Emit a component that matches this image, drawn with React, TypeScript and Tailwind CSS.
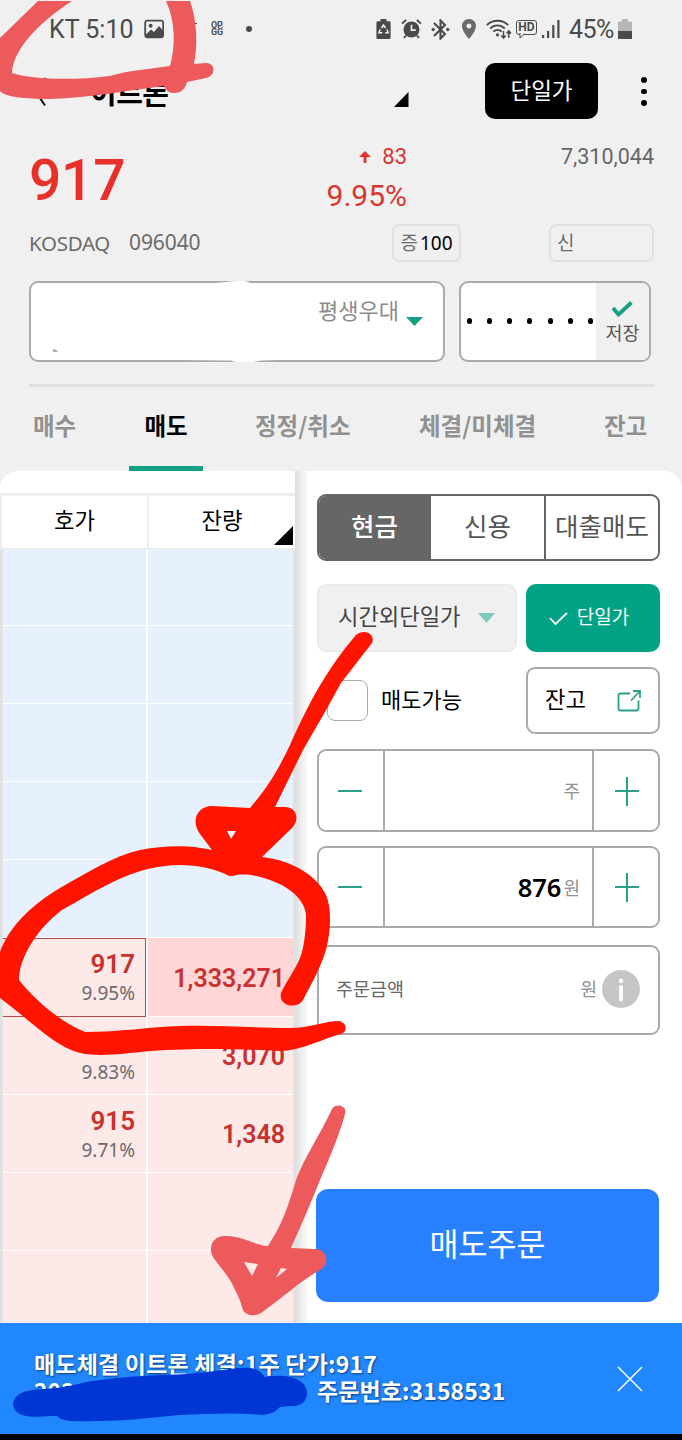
import { ReactNode } from 'react';
import { MdBluetoothConnected, MdLocationOn } from 'react-icons/md';

const ROWS = [
  { side: 'ask' },
  { side: 'ask' },
  { side: 'ask' },
  { side: 'ask' },
  { side: 'ask' },
  { side: 'bid', price: '917', rate: '9.95%', qty: '1,333,271', current: true },
  { side: 'bid', price: '916', rate: '9.83%', qty: '3,070' },
  { side: 'bid', price: '915', rate: '9.71%', qty: '1,348' },
  { side: 'bid' },
  { side: 'bid' },
];

const KR = "font-['Noto_Sans_CJK_KR',sans-serif]";
const NOTO = "font-['Noto_Sans','Noto_Sans_CJK_KR',sans-serif]";

function StatusBar() {
  return (
    <div className="flex h-[58px] items-center pl-[49px] text-[#4a4a4a]">
      <span className="w-[95px] whitespace-nowrap text-[25px] leading-none">KT 5:10</span>
      <svg className="h-5 w-5" viewBox="0 0 20 20">
        <rect x="1.2" y="1.7" width="18" height="16.6" rx="2" fill="none" stroke="#4a4a4a" strokeWidth="1.8" />
        <circle cx="6.6" cy="6.8" r="2" fill="#4a4a4a" />
        <path d="M2 15.5 7 10.5l3 2.6 5-6.1 4 4.6V18H2Z" fill="#4a4a4a" />
      </svg>
      <span className="ml-[30px] h-px w-[3px] -translate-y-[6px] bg-[#4a4a4a]" />
      <span className="ml-[14px] flex w-[14px] flex-col text-[9px] font-bold leading-[7px] tracking-[-0.200px]">
        <span className="h-[7px]">OP.</span>
        <span className="h-[7px]">GG</span>
      </span>
      <span className="ml-[21px] h-[6px] w-[6px] rounded-full bg-[#4a4a4a]" />
      {/* Battery saver */}
      <svg className="ml-[124px] h-5 w-[15px]" viewBox="0 0 15 20">
        <path d="M4.5 0h6v2.2H13c1 0 1.6.6 1.6 1.6v14.6c0 1-.6 1.6-1.6 1.6H2c-1 0-1.6-.6-1.6-1.6V3.8c0-1 .6-1.6 1.6-1.6h2.500Z" fill="#4a4a4a" />
        <path d="m5.400 9 2.100-3 2.100 3M11 10.500l1.200 3.300H9.300M6.300 13.800H2.900l1.200-3.300" fill="none" stroke="#f0f0f0" strokeWidth="1.500" />
      </svg>
      {/* Alarm */}
      <svg className="ml-[10px] h-5 w-[21px]" viewBox="0 0 21 20">
        <path d="M1 4.600 5.200 1M20 4.600 15.800 1M5 16.500l-2 2.500M16 16.500l2 2.500" stroke="#4a4a4a" strokeWidth="1.900" />
        <circle cx="10.500" cy="10.500" r="8" fill="#4a4a4a" />
        <path d="M10.500 5.800v5.400h4.300" fill="none" stroke="#f0f0f0" strokeWidth="1.700" />
      </svg>
      <MdBluetoothConnected className="ml-[6px] h-[25px] w-[25px]" />
      <MdLocationOn className="ml-[4px] h-[24px] w-[24px] text-[#6b6b6b]" />
      {/* Wifi */}
      <svg className="ml-[5px] h-[21px] w-[26px]" viewBox="0 0 26 21">
        <g fill="none" stroke="#4a4a4a" strokeWidth="1.900">
          <path d="M.8 6.200C6.500.2 16.500.2 22.200 6.200" />
          <path d="M4.200 9.500c4-4.200 10.600-4.200 14.600 0" />
          <path d="M7.300 12.700c2.400-2.400 6-2.400 8.400 0" />
          <path d="M17.500 12v7M15.300 16.600l2.200 2.500 2.200-2.500M22.800 19v-7M20.600 14.400l2.200-2.500 2.200 2.500" strokeWidth="1.500" />
        </g>
        <circle cx="11.500" cy="15.800" r="1.600" fill="#4a4a4a" />
      </svg>
      <span className="relative ml-[4px] flex h-[15px] w-[21px] -translate-y-[2px] items-center justify-center rounded-[3px] border-[1.500px] border-[#4a4a4a] text-[12px] font-bold leading-none">
        HD
        <svg className="absolute left-[2px] top-[12px] h-[6px] w-[8px]" viewBox="0 0 8 6">
          <path d="M1 0v5l5-4.500" fill="#f0f0f0" stroke="#4a4a4a" />
        </svg>
      </span>
      <svg className="ml-[5px] h-5 w-[18px]" viewBox="0 0 18 20" fill="#4a4a4a">
        <path d="M0 16h2.200v3H0zM5 12h2.200v7H5zM10.200 6h2.200v13h-2.200zM15.300 1h2.200v18h-2.200z" />
      </svg>
      <span className="ml-[9px] w-[49px] text-[25px] leading-none tracking-[-0.6px]">45%</span>
      <svg className="h-5 w-[14px]" viewBox="0 0 14 20">
        <path d="M4 0h6v2.500h3c.6 0 1 .4 1 1V12H0V3.500c0-.6.4-1 1-1h3Z" fill="#b5b5b5" />
        <path d="M0 12h14v7c0 .6-.4 1-1 1H1c-.6 0-1-.4-1-1Z" fill="#4a4a4a" />
      </svg>
    </div>
  );
}

function Header() {
  return (
    <div className="flex h-[66px] items-start">
      <svg className="ml-[34px] mt-[19px] h-[30px] w-[14px]" viewBox="0 0 14 30">
        <path d="M11.500 1 1.500 14.500l9.500 14" fill="none" stroke="#000" strokeWidth="1.800" />
      </svg>
      <h1 className={`${KR} ml-[42px] mt-[19px] w-[303px] text-[29px] font-bold leading-[29px] tracking-[-0.5px]`}>이트론</h1>
      <svg className="mt-[34px] h-[15px] w-[16px]" viewBox="0 0 16 15">
        <path d="M15.500 0v15H1Z" />
      </svg>
      <button className={`${KR} ml-[76px] mt-[5px] h-[56px] w-[113px] rounded-[10px] bg-black pb-[3px] text-[22.500px] text-white`}>
        단일가
      </button>
      <div className="ml-[43px] mt-[19px] flex flex-col gap-[6px]">
        <i className="h-[5.500px] w-[5.500px] rounded-full bg-black" />
        <i className="h-[5.500px] w-[5.500px] rounded-full bg-black" />
        <i className="h-[5.500px] w-[5.500px] rounded-full bg-black" />
      </div>
    </div>
  );
}

function Quote() {
  return (
    <div className="pl-[29px] pr-[28px]">
      <div className="flex h-[100px]">
        <div className="w-[110px] pt-[28px] text-[57px] font-medium leading-[57px] tracking-[-0.300px] text-[#e8302a]">917</div>
        <div className="ml-[148px] w-[120px] pt-[22px] text-right text-[#d8362f]">
          <div className="flex items-center justify-end text-[22px] leading-[22px]">
            <svg className="mr-[11px] h-3 w-3" viewBox="0 0 12 12">
              <path d="M6 0 12 6H7.400v6H4.600V6H0Z" fill="#e8302a" />
            </svg>
            83
          </div>
          <div className="mt-[13px] text-[30px] leading-[30px]">9.95%</div>
        </div>
        <div className="ml-auto w-[135px] pt-[21px] text-right text-[21.500px] leading-[24px] text-[#666]">7,310,044</div>
      </div>
      <div className={`${NOTO} flex h-[38px] items-center text-[21px] text-[#6b6b6b]`}>
        <span className="w-[100px] text-[20.500px] tracking-[-0.300px]">KOSDAQ</span>
        <span className="tracking-[-0.100px]">096040</span>
        <span className="ml-auto flex h-[38px] w-[69px] items-center justify-center rounded-[7px] border-2 border-[#e0e0e0] text-[19px] leading-none">
          증<span className="ml-[2px] text-[19px] text-black">100</span>
        </span>
        <span className="ml-[88px] flex h-[38px] w-[105px] items-center rounded-[7px] border-2 border-[#e0e0e0] pl-[6px] text-[19px] leading-none">신</span>
      </div>
    </div>
  );
}

function Account() {
  return (
    <div className="ml-[29px] mt-[19px] flex h-[81px] gap-[14px]">
      <div className="relative flex w-[416px] rounded-[9px] border-2 border-[#aaa] bg-white">
        <span className={`${KR} ml-[287px] mt-[15px] text-[22px] leading-[22px] text-[#8c8c8c]`}>평생우대</span>
        <svg className="ml-[7px] mt-[34px] h-[9px] w-[17px]" viewBox="0 0 17 9">
          <path d="M0 0h17L8.500 9Z" fill="#15a083" />
        </svg>
        <svg className="absolute left-[22px] top-[66px] h-[4px] w-[5px]" viewBox="0 0 5 4">
          <path d="M0 0v3h4.500v-1L1 0Z" fill="#aaa" />
        </svg>
        {/* Erased account number */}
        <svg className="absolute -top-[2px] left-[150px] h-[81px] w-[130px]" viewBox="0 0 130 81" fill="#fff">
          <path d="M30 2.500 55 0q12-1 15 3H30ZM0 79l130-1-50 1.500Q60 84 50 79.500Z" />
        </svg>
      </div>
      <div className="flex w-[192px] overflow-hidden rounded-[9px] border-2 border-[#aaa] bg-white">
        <div className="flex w-[135px] items-center justify-between pb-px pl-[6px] pr-[3px]">
          {Array.from({ length: 7 }, (_, i) => (
            <i key={i} className="h-[5.500px] w-[5px] rounded-full bg-black" />
          ))}
        </div>
        <div className="flex flex-1 flex-col items-center bg-[#f0f0f0] pt-[17px]">
          <svg className="-ml-[2px] h-[17px] w-[22px]" viewBox="0 0 22 17">
            <path d="m2 8 5.500 6.500L20.500 2.500" fill="none" stroke="#15a083" strokeWidth="3.800" />
          </svg>
          <span className={`${KR} mt-[6px] text-[18.500px] leading-[19px] text-[#555]`}>저장</span>
        </div>
      </div>
    </div>
  );
}

function Tabs() {
  return (
    <div className={`${KR} ml-[29px] mt-[22px] h-[87px] w-[625px] border-t-[3px] border-[#e0e0e0]`}>
      <div className="flex h-[84px] whitespace-nowrap pt-[26px] text-[23.500px] font-bold leading-[24px] text-[#919191]">
        <span className="ml-[4px] w-[96px]">매수</span>
        <span className="-mb-px flex w-[74px] flex-col items-center justify-between text-black">
          매도
          <i className="h-[6px] w-[74px] bg-[#12a084]" />
        </span>
        <span className="ml-[52px] w-[164px]">정정/취소</span>
        <span className="w-[185px]">체결/미체결</span>
        <span>잔고</span>
      </div>
    </div>
  );
}

function OrderBook() {
  return (
    <div className="relative z-10 flex w-[295px] flex-col overflow-hidden rounded-tl-[18px] bg-white">
      <div className={`${KR} relative z-10 mt-[22px] flex h-[57px] border-b-2 border-t-[3px] border-[#eee] bg-white text-[22.300px] leading-[47px]`}>
        <div className="w-[149px] border-l-2 border-r-2 border-[#eee] text-center">호가</div>
        <div className="relative flex-1 text-center">
          <span>잔량</span>
          <svg className="absolute bottom-[3px] right-[2px] h-[19px] w-[19px]" viewBox="0 0 19 19">
            <path d="M19 0v19H0Z" />
          </svg>
        </div>
      </div>
      <div className="-mt-[2px] min-h-0 flex-1 border-l-[3px] border-r-2 border-[#e2e2e2]">
        {ROWS.map((row, i) => (
          <div key={i} className={`flex h-[78.100px] ${row.side === 'ask' ? 'bg-[#e7f1fe]' : 'bg-[#fde9e8]'}`}>
            <div
              className={`flex w-[143px] flex-col items-end ${
                row.current ? 'border border-l-0 border-[#b54a4c] pr-[10px] pt-[11px]' : 'border-b-[1.500px] border-white pr-[11px] pt-[12px]'
              }`}
            >
              <span className="text-[26px] font-semibold leading-[28px] text-[#c7312e]">{row.price}</span>
              <span className={`${NOTO} mt-[2px] text-[19px] leading-[26px] text-[#6b6b6b]`}>{row.rate}</span>
            </div>
            <div
              className={`flex flex-1 items-center justify-end border-b-[1.500px] border-l-2 border-white pr-[8px] pt-[4px] text-[25px] font-semibold text-[#c7312e] ${
                row.current ? 'bg-[#ffd5d5]' : ''
              }`}
            >
              {row.qty}
            </div>
          </div>
        ))}
      </div>
    </div>
  );
}

function Stepper({ height, children }: { height: string; children: ReactNode }) {
  return (
    <div className={`flex ${height} rounded-[9px] border-2 border-[#aaa]`}>
      <div className="flex w-[66px] items-center justify-center border-r-2 border-[#aaa] pr-[3px]">
        <i className="h-[2px] w-[24px] bg-[#2aa089]" />
      </div>
      <div className="flex flex-1 items-center justify-end pr-[12px]">{children}</div>
      <div className="flex w-[66px] items-center justify-center border-l-2 border-[#aaa] pl-[2px]">
        <svg className="h-[30px] w-[24px]" viewBox="0 0 24 30">
          <path d="M0 15h24M12 1v29" stroke="#2aa089" strokeWidth="2" />
        </svg>
      </div>
    </div>
  );
}

function OrderForm() {
  return (
    <div className={`${KR} flex-1 rounded-tr-[18px] bg-gradient-to-r from-[#dedede] from-0% via-white via-[14px] to-white pl-[22px] pr-[22px] pt-[23px]`}>
      <div className="flex h-[67px] overflow-hidden rounded-[9px] border-2 border-[#666] bg-white text-[25.500px] leading-[58px] text-[#555]">
        <div className="w-[112px] bg-[#666] pr-px text-center font-medium text-white">현금</div>
        <div className="w-[115px] border-r-2 border-[#666] text-center">신용</div>
        <div className="flex-1 text-center">대출매도</div>
      </div>

      <div className="mt-[23px] flex h-[68px] justify-between">
        <div className="flex w-[200px] items-center rounded-[9px] border-2 border-[#ebebeb] bg-[#f0f0f0] pb-[5px] pl-[19px] text-[22.200px] text-[#444]">
          시간외단일가
          <svg className="ml-[18px] mt-[4px] h-[10px] w-[17px]" viewBox="0 0 17 10">
            <path d="M0 0h17L8.500 10Z" fill="#7dcbbc" />
          </svg>
        </div>
        <button className="flex w-[134px] items-center justify-center rounded-[10px] bg-[#02a384] pb-[4px] pr-[8px] text-[19px] text-white">
          <svg className="mr-[9px] mt-[5px] h-[13px] w-[19px]" viewBox="0 0 19 13">
            <path d="m1 6 5.500 6L18 1" fill="none" stroke="#fff" strokeWidth="1.800" />
          </svg>
          단일가
        </button>
      </div>

      <div className="mt-[15px] flex h-[67px] items-center justify-between">
        <label className="ml-[10px] flex items-center text-[22px] leading-none">
          <i className="mr-[13px] h-[41px] w-[41px] rounded-[8px] border-[1.500px] border-[#aaa] bg-white" />
          <span className="pb-[6px]">매도가능</span>
        </label>
        <button className="flex h-[67px] w-[134px] items-center justify-between rounded-[9px] border-2 border-[#aaa] bg-white pb-[4px] pl-[17px] pr-[17px] text-[22.300px]">
          잔고
          <svg className="mt-[4px] h-[22px] w-[24px]" viewBox="0 0 24 22" fill="none" stroke="#2aa089" strokeWidth="1.800">
            <path d="M13 3.500H3.500Q1.500 3.500 1.500 5.500v13q0 2 2 2H20q1.500 0 1.500-1.500v-8.500" />
            <path d="M14 10.500 23 1M16 1h7v7" />
          </svg>
        </button>
      </div>

      <div className="mt-[15px]">
        <Stepper height="h-[83px]">
          <span className="text-[18px] text-[#919191]">주</span>
        </Stepper>
      </div>
      <div className="mt-[14px]">
        <Stepper height="h-[82px]">
          <span className={`${NOTO} text-[25.500px] font-semibold`}>876</span>
          <span className="ml-[2px] text-[18px] text-[#919191]">원</span>
        </Stepper>
      </div>
      <div className="mt-[17px] flex h-[90px] items-center rounded-[9px] border-2 border-[#aaa] pb-[3px] pl-[17px] pr-[18px] text-[18.500px] text-[#666]">
        주문금액
        <span className="ml-auto text-[18px] text-[#919191]">원</span>
        <svg className="ml-[5px] h-[38px] w-[38px]" viewBox="0 0 38 38">
          <circle cx="19" cy="19" r="19" fill="#c6c6c6" />
          <circle cx="19" cy="11" r="2.300" fill="#fff" />
          <path d="M19 17v12.500" stroke="#fff" strokeWidth="3.800" strokeLinecap="round" />
        </svg>
      </div>
      <button className="-ml-px mt-[154px] h-[113px] w-[343px] rounded-[12px] bg-[#287fff] pb-[5px] text-[31.500px] text-white">매도주문</button>
    </div>
  );
}

function Toast() {
  return (
    <div className={`${KR} flex h-[111px] shrink-0 items-start bg-[#2087ff] pl-[34px] pt-[27px] text-[23px] font-bold leading-[27px] text-white [text-shadow:1px_1px_2px_#0008]`}>
      <div className="w-[583px] whitespace-nowrap">
        <p className="tracking-[0.200px]">매도체결 이트론 체결:1주 단가:917</p>
        <p className="flex">
          <span className="w-[283px]">202</span>
          <span className="tracking-[0.100px]">주문번호:3158531</span>
        </p>
      </div>
      <svg className="mt-[16px] h-[26px] w-[26px]" viewBox="0 0 26 26">
        <path d="m1 1 24 24M25 1 1 25" stroke="#fff" strokeWidth="1.500" />
      </svg>
    </div>
  );
}

// Freehand marker strokes on top of the screen
function Scribbles() {
  return (
    <svg className="pointer-events-none absolute inset-0 z-20 h-[1440px] w-[682px]" viewBox="0 0 682 1440" fillRule="evenodd">
      <path
        fill="#ec5a5c"
        d="M38 1H72C50 15 13 45 12 73C30 79 70 81 110 76C130 70 150 69 170 66C176 45 175 20 166 1H190C197 20 198 45 194 64L206 63C216 63 216 76 206 78L187 82C185 90 180 93 174 93C168 93 166 90 164 86C130 90 90 98 50 99C25 99 5 97 0 91V38Z"
      />
      <path
        fill="#ff1400"
        d="M356 635C364 628 376 634 372 643L341 683L325 712L303 750L275 807H285C297 807 300 820 292 828L262 857C250 865 242 876 230 876C222 875 212 855 212 850L200 834C190 820 198 806 212 806L250 808C270 785 281 764 290 745C310 700 328 668 356 635ZM227 831L231 839L236 831Z"
      />
      <path
        fill="#ff1400"
        d="M341 1034C325 1038 300 1051 280 1051C240 1049 200 1048 150 1051C120 1054 100 1057 80 1053C55 1047 30 1020 0 998V952C10 925 33 904 60 888C85 874 113 856 140 850C170 844 195 846 212 850L262 857C290 860 315 874 325 893C333 908 330 935 326 950C320 970 308 990 303 1000C297 1010 278 1006 281 993C286 982 295 970 300 958C304 948 306 930 306 915C305 900 290 887 270 880C250 873 240 874 230 876C210 866 185 863 165 866C125 870 90 895 62 910C38 928 19 957 19 980C35 1000 60 1022 85 1032C120 1032 150 1027 180 1026C220 1025 250 1028 290 1028C310 1028 325 1021 339 1021C347 1023 348 1031 341 1034Z"
      />
      <path
        fill="#ec5a5c"
        d="M332 1109C336 1102 348 1106 345 1114C338 1140 325 1168 318 1185C310 1205 300 1228 291 1248L316 1249C328 1250 330 1264 320 1270C300 1281 280 1300 265 1310C257 1318 246 1316 243 1310C240 1300 238 1295 235 1290C230 1277 222 1270 213 1257C207 1245 215 1235 226 1236C242 1236 255 1245 268 1246C280 1227 285 1217 296 1180C304 1158 320 1135 332 1109ZM244 1262L252 1276L258 1264ZM281 1268L276 1278L287 1269Z"
      />
      <path
        fill="#0037d4"
        d="M13 1405C14 1393 25 1390 43 1389C70 1388 85 1381 100 1380C130 1376 160 1375 187 1374C215 1372 235 1367 250 1368C258 1369 261 1372 265 1377C285 1373 307 1378 307 1393C307 1402 300 1407 290 1406L280 1407C275 1412 272 1414 262 1415C235 1412 205 1414 180 1415C150 1418 120 1421 100 1421C80 1421 63 1423 57 1416C40 1416 16 1421 13 1405Z"
      />
    </svg>
  );
}

export default function App() {
  return (
    <div className="relative flex h-[1440px] w-[682px] flex-col overflow-hidden bg-[#f0f0f0] font-[Roboto,'Noto_Sans_CJK_KR',sans-serif] text-black">
      <StatusBar />
      <Header />
      <Quote />
      <Account />
      <Tabs />
      <div className="flex min-h-0 flex-1">
        <OrderBook />
        <OrderForm />
      </div>
      <Toast />
      <div className="h-[6px] shrink-0 bg-black" />
      <Scribbles />
    </div>
  );
}
